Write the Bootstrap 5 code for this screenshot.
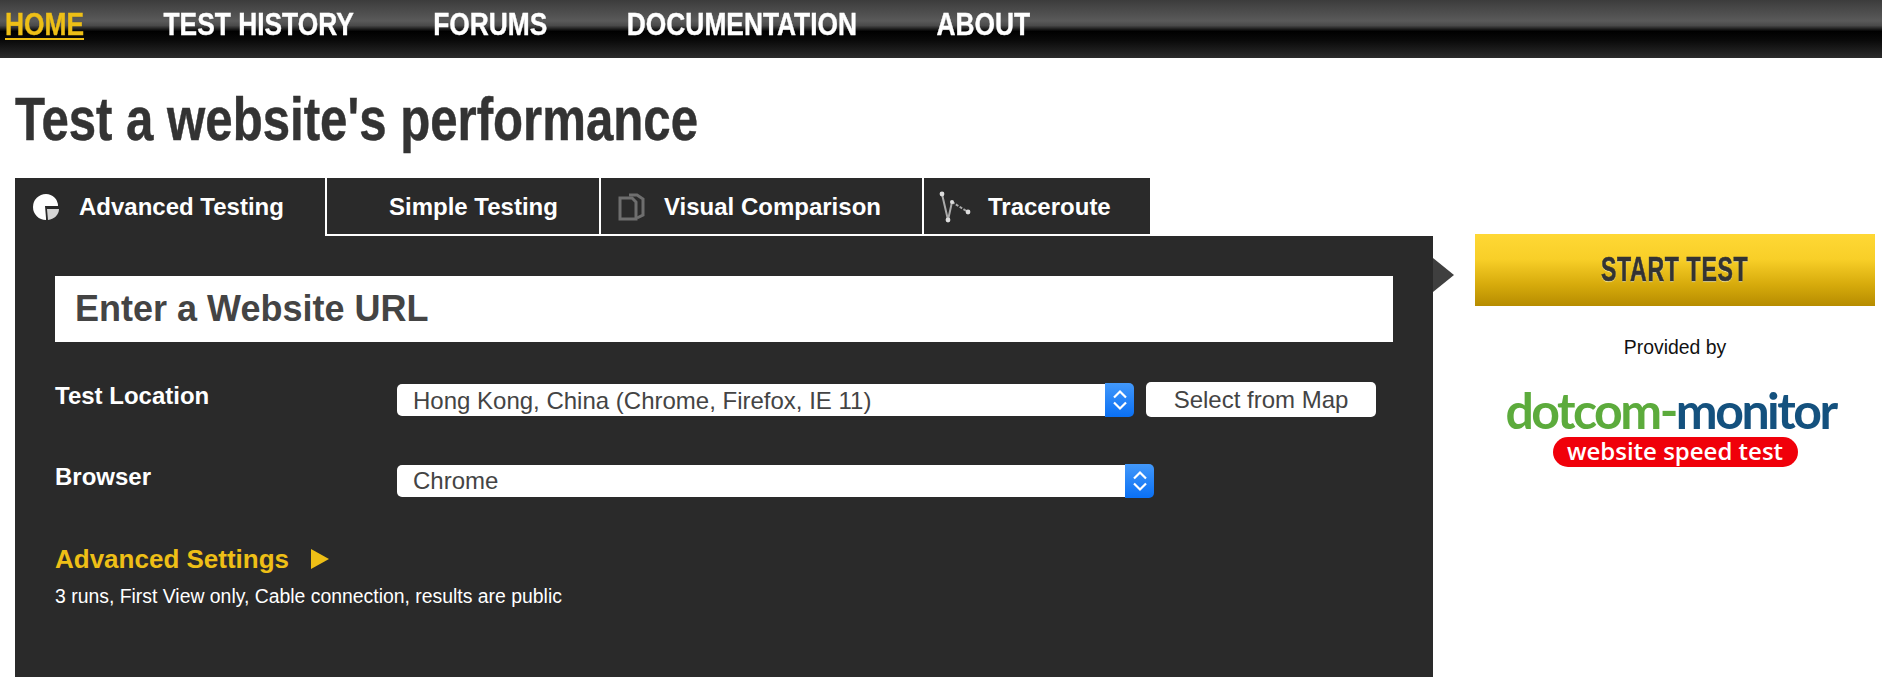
<!DOCTYPE html>
<html lang="en">
<head>
<meta charset="utf-8">
<title>WebPagetest</title>
<link href="https://cdn.jsdelivr.net/npm/bootstrap@5.3.0/dist/css/bootstrap.min.css" rel="stylesheet">
<style>
html,body{height:684px;overflow:hidden;background:#fff;font-family:"Liberation Sans",Arial,sans-serif}
.topbar{height:58px;padding-left:5px;background:linear-gradient(#3c3c3c 0,#5a5a5a 36%,#4a4a4a 44%,#000 54%,#0a0a0a 70%,#2c2c2c 100%)}
.toplinks{gap:96.6px;transform:scaleX(.823);transform-origin:left center}
.toplink{font-weight:700;font-size:32px;line-height:32px;color:#fff;text-decoration:none;margin-top:8px;height:34px;white-space:nowrap;-webkit-text-stroke:.4px currentColor}
.toplink.sel{color:#eebf16;text-decoration:underline;text-decoration-thickness:2px;text-underline-offset:3px}
.pagehead{font-weight:700;font-size:61px;line-height:70px;color:#333;margin:26px 0 0 15px;height:94px;white-space:nowrap;transform:scaleX(.806);transform-origin:left center;-webkit-text-stroke:.5px currentColor}
.stage{padding-left:15px}
.leftcol{width:1418px}
.tabrow{height:58px}
.tabcell{background:#2a2a2a;height:58px;color:#fff;font-weight:700;font-size:24px;line-height:1;text-decoration:none;border-right:2px solid #fff;border-bottom:2px solid #fff;white-space:nowrap;padding-top:2px}
.tabcell.sel{border-bottom:0;padding:0 0 0 15px;width:312px}
.tabcell.t2{width:274px;padding-left:62px}
.tabcell.t3{width:323px;padding-left:16px}
.tabcell.t4{width:226px;padding-left:15px;border-right:0}
.tabcell svg{flex:none;margin-right:17px;filter:blur(.5px)}
.panel{background:#2a2a2a;height:441px;padding:40px 40px 0 40px}
.urlbox{height:66px;background:#fff;color:#444;font-weight:700;font-size:36px;padding:0 20px;border:0;border-radius:0;box-shadow:none}
.urlbox::placeholder{color:#444;opacity:1}
.fieldrow{color:#fff}
.fieldname{width:342px;font-weight:700;font-size:24px;line-height:28px;flex:none}
.namea{padding-top:40px}
.nameb{padding-top:46px}
.selwrap{height:32px}
.selwrap .form-select{height:32px;padding:0 0 0 16px;border:0;border-radius:5px 0 0 5px;font-size:24px;line-height:32px;color:#444;background:#fff;font-family:inherit}
.selwrap .nudged{padding-top:1px}
.selbtn{width:29px;height:34px;flex:none;border-radius:0 5px 5px 0;background:linear-gradient(#4298fa,#0a70f4)}
.mapbtn{width:230px;height:35px;padding:1px 0 0;background:#fff;color:#444;font-size:24px;line-height:34px;border:0;border-radius:5px;margin-left:12px}
.advrow{gap:22px;margin-top:47px}
.advlink{color:#eebf16;font-weight:700;font-size:26px;line-height:30px;text-decoration:none}
.summary{color:#fff;font-size:19.4px;line-height:22px;margin-top:11px}
.sidecol{width:400px;margin-left:42px}
.gobtn{height:72px;width:400px;margin-top:56px;border:0;border-radius:0;padding:0 0 2px;background:linear-gradient(#ffd835 0,#f8cf28 35%,#d7ab0c 70%,#b68c00 100%)}
.gobtn span{display:inline-block;color:#333;font-weight:700;font-size:35px;text-shadow:0 1px 1px #fff3b0;letter-spacing:1px;transform:scaleX(.66);-webkit-text-stroke:.6px #333;white-space:nowrap}
.gotip{left:100%;top:22px;width:0;height:0;border-top:17px solid transparent;border-bottom:17px solid transparent;border-left:21px solid #3f3f3f}
.provided{font-size:19.4px;line-height:22px;color:#111;margin-top:30px}
.logoword{font-family:Lato,sans-serif;font-weight:700;font-size:50px;line-height:50px;margin-top:27px;padding-right:9px;white-space:nowrap;letter-spacing:-2.5px}
.logogreen{color:#5cab3c}
.logoblue{color:#14517e}
.logopill{width:245px;height:30px;background:#f0000a;border-radius:15px;color:#fff;font-family:"Open Sans",sans-serif;font-weight:600;font-size:24px;line-height:28px;margin:2px auto 0}
</style>
</head>
<body>
<nav class="topbar">
  <div class="toplinks d-flex">
  <a class="toplink sel" href="#">HOME</a>
  <a class="toplink" href="#">TEST HISTORY</a>
  <a class="toplink" href="#">FORUMS</a>
  <a class="toplink" href="#">DOCUMENTATION</a>
  <a class="toplink" href="#">ABOUT</a>
  </div>
</nav>
<h1 class="pagehead">Test a website's performance</h1>
<div class="stage d-flex">
  <div class="leftcol">
    <div class="tabrow d-flex">
      <a class="tabcell sel d-flex align-items-center" href="#">
        <svg width="32" height="32" viewBox="0 0 32 32"><path d="M16 3a13 13 0 1 0 0 26v-2l-1-12h13a12 12 0 0 0-12-12z" fill="#fff"/><path d="M17 18h12c0 6-5 10-11 11z" fill="#d5d5d5"/></svg>Advanced Testing</a>
      <a class="tabcell t2 d-flex align-items-center" href="#">Simple Testing</a>
      <a class="tabcell t3 d-flex align-items-center" href="#">
        <svg width="30" height="32" viewBox="0 0 30 32" fill="none" stroke="#6e6e6e" stroke-width="3"><path d="M3 7h12l4 4v17H3z"/><path d="M12 4h8l6 4v16l-6 3"/></svg>Visual Comparison</a>
      <a class="tabcell t4 d-flex align-items-center" href="#">
        <svg width="32" height="34" viewBox="0 0 32 34" fill="none" stroke="#aaa" stroke-width="2"><path d="M3 4l6 26 4-18"/><path d="M13 12l16 10" stroke-dasharray="3 1.5"/><g fill="#ddd" stroke="none"><circle cx="3" cy="4" r="2.4"/><circle cx="9" cy="30" r="2.4"/><circle cx="13" cy="12" r="2"/><circle cx="29" cy="22" r="2.4"/></g></svg>Traceroute</a>
    </div>
    <div class="panel position-relative">
      <span class="gotip position-absolute"></span>
      <input class="urlbox form-control" type="text" placeholder="Enter a Website URL">
      <div class="fieldrow d-flex">
        <label class="fieldname namea">Test Location</label>
        <div class="d-flex align-items-center mt-4 pt-3 flex-grow-1">
          <div class="selwrap d-flex align-items-center" style="width:737px">
            <select class="form-select nudged"><option>Hong Kong, China (Chrome, Firefox, IE 11)</option></select>
            <span class="selbtn d-flex align-items-center justify-content-center"><svg width="16" height="24" viewBox="0 0 16 24" fill="none" stroke="#fff" stroke-width="2.2"><path d="M2 9.5l6-6 6 6M2 14.5l6 6 6-6"/></svg></span>
          </div>
          <button class="mapbtn btn" type="button">Select from Map</button>
        </div>
      </div>
      <div class="fieldrow d-flex">
        <label class="fieldname nameb">Browser</label>
        <div class="d-flex align-items-center mt-5 flex-grow-1">
          <div class="selwrap d-flex align-items-center" style="width:757px">
            <select class="form-select"><option>Chrome</option></select>
            <span class="selbtn d-flex align-items-center justify-content-center"><svg width="16" height="24" viewBox="0 0 16 24" fill="none" stroke="#fff" stroke-width="2.2"><path d="M2 9.5l6-6 6 6M2 14.5l6 6 6-6"/></svg></span>
          </div>
        </div>
      </div>
      <div class="advrow d-flex align-items-center">
        <a class="advlink" href="#">Advanced Settings</a>
        <svg width="18" height="20" viewBox="0 0 18 20"><path d="M0 0l18 10L0 20z" fill="#eebf16"/></svg>
      </div>
      <div class="summary">3 runs, First View only, Cable connection, results are public</div>
    </div>
  </div>
  <div class="sidecol text-center">
    <button class="gobtn btn d-block" type="button"><span>START TEST</span></button>
    <div class="provided">Provided by</div>
    <div class="logoword"><span class="logogreen">dotcom-</span><span class="logoblue">monitor</span></div>
    <div class="logopill">website speed test</div>
  </div>
</div>
</body>
</html>
